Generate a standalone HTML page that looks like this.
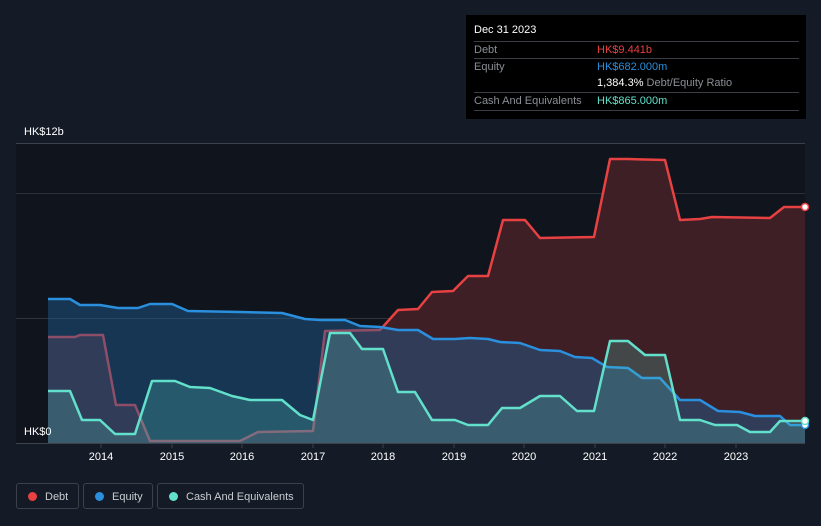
<!DOCTYPE html>
<html><head><meta charset="utf-8"><style>
body{margin:0;width:821px;height:526px;background:#151b26;font-family:"Liberation Sans",sans-serif;overflow:hidden;position:relative}
.tt{position:absolute;left:466px;top:15px;width:340px;height:104px;background:#000;color:#fff;font-size:11px}
.tt .r{position:absolute;left:8px;width:325px;border-top:1px solid #3a3d42;height:17px;line-height:17px}
.g{color:#8a8f96}
.leg{position:absolute;top:483px;height:26px;border:1px solid #3b414a;border-radius:3px;color:#c9ccd1;font-size:11px;line-height:26px;box-sizing:border-box}
.leg i{position:absolute;left:11px;top:8px;width:9px;height:9px;border-radius:50%}
</style></head><body>
<svg width="821" height="526" style="position:absolute;left:0;top:0">
<rect x="16" y="143" width="789" height="300" fill="#10141d"/>
<line x1="16" y1="143.5" x2="805" y2="143.5" stroke="#3c414a"/>
<line x1="16" y1="193.5" x2="805" y2="193.5" stroke="#2a2f38"/>
<line x1="16" y1="318.5" x2="805" y2="318.5" stroke="#2f343d"/>
<line x1="16" y1="443.5" x2="805" y2="443.5" stroke="#3c414a"/>
<g stroke="#3c414a"><line x1="101" y1="443" x2="101" y2="448"/><line x1="172" y1="443" x2="172" y2="448"/><line x1="242" y1="443" x2="242" y2="448"/><line x1="313" y1="443" x2="313" y2="448"/><line x1="383" y1="443" x2="383" y2="448"/><line x1="454" y1="443" x2="454" y2="448"/><line x1="524" y1="443" x2="524" y2="448"/><line x1="595" y1="443" x2="595" y2="448"/><line x1="665" y1="443" x2="665" y2="448"/><line x1="736" y1="443" x2="736" y2="448"/></g>
<g stroke-width="2.5" stroke-linejoin="round" fill-opacity="1">
<path d="M48,443 L48,337 75,337 80,335 103,335 116,405 135,405 150,441 240,441 258,432 313,431 325,331 380,330 398,310 418,309 432,292 453,291 468,276 488,276 503,220 525,220 540,238 594,237 610,159 628,159 665,160 680,220 700,219 712,217 770,218 784,207 805,207 805,443Z" fill="#3e1f26" stroke="none"/>
<path d="M48,337 75,337 80,335 103,335 116,405 135,405 150,441 240,441 258,432 313,431 325,331 380,330 398,310 418,309 432,292 453,291 468,276 488,276 503,220 525,220 540,238 594,237 610,159 628,159 665,160 680,220 700,219 712,217 770,218 784,207 805,207" fill="none" stroke="#e84142"/>
<path d="M48,443 L48,299 70,299 80,305 100,305 118,308 138,308 150,304 172,304 188,311 240,312 282,313 305,319 320,320 345,320 360,326 380,327 398,330 418,330 433,339 455,339 470,338 488,339 500,342 520,343 540,350 560,351 575,357 592,358 607,367 628,368 642,378 660,378 680,400 700,400 718,411 740,412 755,416 780,416 790,425 805,425 805,443Z" fill="#1e5f96" fill-opacity="0.45" stroke="none"/>
<path d="M48,299 70,299 80,305 100,305 118,308 138,308 150,304 172,304 188,311 240,312 282,313 305,319 320,320 345,320 360,326 380,327 398,330 418,330 433,339 455,339 470,338 488,339 500,342 520,343 540,350 560,351 575,357 592,358 607,367 628,368 642,378 660,378 680,400 700,400 718,411 740,412 755,416 780,416 790,425 805,425" fill="none" stroke="#2a8fdd"/>
<path d="M48,443 L48,391 70,391 82,420 100,420 115,434 135,434 152,381 175,381 190,387 210,388 232,396 250,400 282,400 300,415 313,420 330,333 350,333 362,349 383,349 398,392 415,392 432,420 455,420 468,425 488,425 502,408 520,408 540,396 560,396 577,411 594,411 610,341 628,341 645,355 665,355 680,420 700,420 715,425 737,425 750,432 770,432 780,421 805,421 805,443Z" fill="#5ad8c6" fill-opacity="0.22" stroke="none"/>
<path d="M48,391 70,391 82,420 100,420 115,434 135,434 152,381 175,381 190,387 210,388 232,396 250,400 282,400 300,415 313,420 330,333 350,333 362,349 383,349 398,392 415,392 432,420 455,420 468,425 488,425 502,408 520,408 540,396 560,396 577,411 594,411 610,341 628,341 645,355 665,355 680,420 700,420 715,425 737,425 750,432 770,432 780,421 805,421" fill="none" stroke="#63e0cb"/>
</g>
<circle cx="805" cy="207" r="3.5" fill="#fff" stroke="#e84142" stroke-width="1.5"/>
<circle cx="805" cy="425" r="3.5" fill="#fff" stroke="#2a8fdd" stroke-width="1.5"/>
<circle cx="805" cy="421" r="3.5" fill="#fff" stroke="#63e0cb" stroke-width="1.5"/>
<g fill="#fff" font-size="11" font-family="Liberation Sans,sans-serif" text-anchor="middle">
<text x="101" y="460">2014</text><text x="172" y="460">2015</text><text x="242" y="460">2016</text><text x="313" y="460">2017</text><text x="383" y="460">2018</text><text x="454" y="460">2019</text><text x="524" y="460">2020</text><text x="595" y="460">2021</text><text x="665" y="460">2022</text><text x="736" y="460">2023</text>
<text x="24" y="135" text-anchor="start">HK$12b</text>
<text x="24" y="435" text-anchor="start">HK$0</text>
</g>
</svg>
<div class="tt">
<div style="position:absolute;left:8px;top:9px;font-size:11px">Dec 31 2023</div>
<div class="r" style="top:26px"><span class="g">Debt</span><span style="position:absolute;left:123px;color:#e84142">HK$9.441b</span></div>
<div class="r" style="top:43px"><span class="g">Equity</span><span style="position:absolute;left:123px;color:#2a8fdd">HK$682.000m</span></div>
<div class="r" style="top:60px;border-top:none"><span style="position:absolute;left:123px">1,384.3% <span class="g">Debt/Equity Ratio</span></span></div>
<div class="r" style="top:77px;border-bottom:1px solid #3a3d42"><span class="g">Cash And Equivalents</span><span style="position:absolute;left:123px;color:#63e0cb">HK$865.000m</span></div>
</div>
<div class="leg" style="left:16px;width:63px"><i style="background:#e84142"></i><span style="position:absolute;left:28px">Debt</span></div>
<div class="leg" style="left:83px;width:70px"><i style="background:#2a8fdd"></i><span style="position:absolute;left:28px">Equity</span></div>
<div class="leg" style="left:157px;width:147px"><i style="background:#63e0cb"></i><span style="position:absolute;left:28px">Cash And Equivalents</span></div>
</body></html>
